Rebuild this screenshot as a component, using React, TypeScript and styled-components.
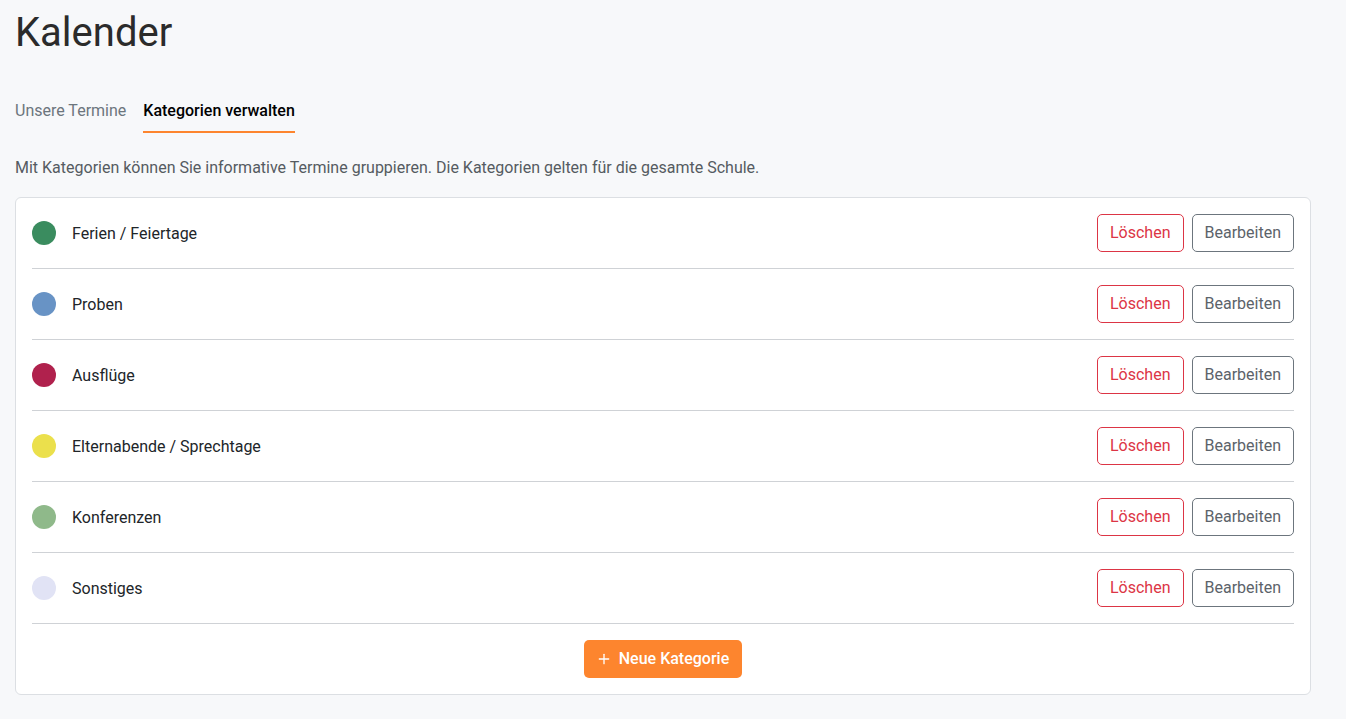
import React from 'react'
import styled, { createGlobalStyle } from 'styled-components'
import { Plus } from 'lucide-react'

const GlobalStyle = createGlobalStyle`
  html, body {
    margin: 0;
    padding: 0;
    background-color: #f7f8fa;
    font-family: Roboto, 'Liberation Sans', sans-serif;
    color: #212529;
  }
  * { box-sizing: border-box; }
`

const Screen = styled.div`
  min-height: 100vh;
  padding: 9px 35px 24px 15px;
`

const Title = styled.h1`
  font-size: 40px;
  font-weight: 400;
  line-height: 1.2;
  margin: 0;
  color: #2b2b2b;
`

const Tabs = styled.nav`
  display: flex;
  gap: 17px;
  margin-top: 42px;
`

const Tab = styled.div<{ $active?: boolean }>`
  font-size: 16px;
  line-height: 24px;
  padding-bottom: 8px;
  border-bottom: 2px solid ${(p) => (p.$active ? '#fd852e' : 'transparent')};
  color: ${(p) => (p.$active ? '#000' : '#6c757d')};
  font-weight: ${(p) => (p.$active ? 500 : 400)};
  cursor: pointer;
`

const Intro = styled.p`
  margin: 23px 0 17px;
  font-size: 16px;
  line-height: 24px;
  color: #555b61;
`

const Card = styled.div`
  background: #fff;
  border: 1px solid #dcdfe3;
  border-radius: 6px;
  padding: 0 16px 16px;
  display: flex;
  flex-direction: column;
`

const Row = styled.div`
  display: flex;
  align-items: center;
  height: 71px;
  border-bottom: 1px solid #cfd2d6;
`

const Dot = styled.span<{ $color: string }>`
  width: 24px;
  height: 24px;
  border-radius: 50%;
  background: ${(p) => p.$color};
  flex-shrink: 0;
`

const Label = styled.span`
  margin-left: 16px;
  font-size: 16px;
  color: #212529;
  flex: 1;
`

const Actions = styled.div`
  display: flex;
  gap: 8px;
`

const OutlineButton = styled.button<{ $tone: 'danger' | 'secondary' }>`
  font-family: inherit;
  font-size: 16px;
  line-height: 24px;
  padding: 6px 12px;
  border-radius: 5px;
  background: #fff;
  cursor: pointer;
  border: 1px solid ${(p) => (p.$tone === 'danger' ? '#dc3545' : '#6c757d')};
  color: ${(p) => (p.$tone === 'danger' ? '#dc3545' : '#5c636a')};
`

const Footer = styled.div`
  display: flex;
  justify-content: center;
  margin-top: 16px;
`

const AddButton = styled.button`
  display: flex;
  align-items: center;
  gap: 7px;
  font-family: inherit;
  font-size: 16px;
  font-weight: 500;
  line-height: 24px;
  padding: 7px 13px 7px 12px;
  border: none;
  border-radius: 5px;
  background: #fd852e;
  color: #fff;
  cursor: pointer;
`

const categories = [
  { name: 'Ferien / Feiertage', color: '#3a8c5f' },
  { name: 'Proben', color: '#6893c5' },
  { name: 'Ausflüge', color: '#b0214d' },
  { name: 'Elternabende / Sprechtage', color: '#ebe04c' },
  { name: 'Konferenzen', color: '#8fb98a' },
  { name: 'Sonstiges', color: '#e1e3f5' },
]

const App = () => {
  return (
    <Screen>
      <GlobalStyle />
      <Title>Kalender</Title>
      <Tabs>
        <Tab>Unsere Termine</Tab>
        <Tab $active>Kategorien verwalten</Tab>
      </Tabs>
      <Intro>
        Mit Kategorien können Sie informative Termine gruppieren. Die Kategorien gelten für die gesamte Schule.
      </Intro>
      <Card>
        {categories.map((c) => (
          <Row key={c.name}>
            <Dot $color={c.color} />
            <Label>{c.name}</Label>
            <Actions>
              <OutlineButton $tone='danger'>Löschen</OutlineButton>
              <OutlineButton $tone='secondary'>Bearbeiten</OutlineButton>
            </Actions>
          </Row>
        ))}
        <Footer>
          <AddButton>
            <Plus size={16} strokeWidth={2} />
            Neue Kategorie
          </AddButton>
        </Footer>
      </Card>
    </Screen>
  )
}

export default App
